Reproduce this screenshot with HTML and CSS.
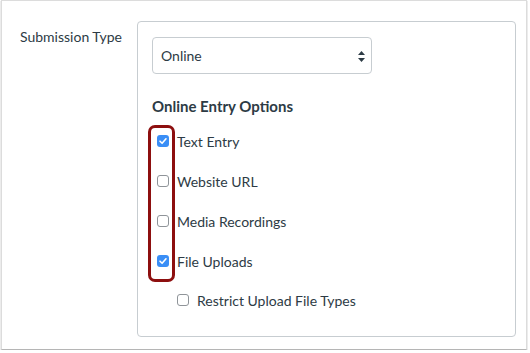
FILE: index.html
```html
<!DOCTYPE html>
<html lang="en">
<head>
    <meta charset="UTF-8">
    <title>Submission Type</title>
    <link rel="stylesheet" href="styles.css">
</head>
<body>
    <div class="frame">
        <div class="field-row">
            <div class="field-label">Submission Type</div>
            <div class="field-box">
                <!-- select -->
                <div class="select">
                    <span>Online</span>
                    <svg class="select-arrows" width="7" height="11" viewBox="0 0 7 11">
                        <path d="M3.5 0 L7 4 L0 4 Z" fill="#2d3b45"/>
                        <path d="M0 7 L7 7 L3.5 11 Z" fill="#2d3b45"/>
                    </svg>
                </div>

                <h3 class="options-title">Online Entry Options</h3>

                <div class="options">
                    <div class="option">
                        <span class="box checked">
                            <svg width="12" height="12" viewBox="0 0 12 12"><path d="M3 6.2 L5.1 8.3 L9 3.8" fill="none" stroke="#fff" stroke-width="1.6" stroke-linecap="round" stroke-linejoin="round"/></svg>
                        </span>
                        <span>Text Entry</span>
                    </div>
                    <div class="option">
                        <span class="box"></span>
                        <span>Website URL</span>
                    </div>
                    <div class="option">
                        <span class="box"></span>
                        <span>Media Recordings</span>
                    </div>
                    <div class="option">
                        <span class="box checked">
                            <svg width="12" height="12" viewBox="0 0 12 12"><path d="M3 6.2 L5.1 8.3 L9 3.8" fill="none" stroke="#fff" stroke-width="1.6" stroke-linecap="round" stroke-linejoin="round"/></svg>
                        </span>
                        <span>File Uploads</span>
                    </div>
                    <div class="option sub-option">
                        <span class="box"></span>
                        <span>Restrict Upload File Types</span>
                    </div>

                    <!-- highlight -->
                    <div class="highlight"></div>
                </div>
            </div>
        </div>
    </div>
</body>
</html>
```

FILE: styles.css
```css
body {
    margin: 0;
    background-color: #fff;
    font-family: Lato, "Liberation Sans", sans-serif;
    color: #2d3b45;
}
.frame {
    box-sizing: border-box;
    width: 526px;
    height: 350px;
    margin-left: 1px;
    border: 1px solid #dcdcdc;
    border-bottom-color: #b5b5b5;
    box-shadow: 0 1px 1px rgba(0, 0, 0, 0.45);
    padding: 20px 0 0 18px;
}
.field-row {
    display: flex;
}
.field-label {
    width: 117px;
    font-size: 14px;
    line-height: 20px;
    padding-top: 6px;
}
.field-box {
    box-sizing: border-box;
    width: 379px;
    height: 316px;
    border: 1px solid #c7cdd1;
    border-radius: 4px;
    padding: 15px 14px;
}
.select {
    box-sizing: border-box;
    width: 220px;
    height: 37px;
    border: 1px solid #c7cdd1;
    border-radius: 4px;
    display: flex;
    align-items: center;
    justify-content: space-between;
    padding: 0 6px 0 8px;
    font-size: 14px;
}
.select-arrows {
    margin-top: 1px;
}
.options-title {
    margin: 22px 0 5px;
    font-size: 15px;
    line-height: 20px;
    font-weight: bold;
}
.options {
    position: relative;
}
.option {
    display: flex;
    align-items: center;
    gap: 8px;
    height: 40px;
    font-size: 14px;
    padding-left: 5px;
}
.sub-option {
    padding-left: 25px;
    height: 38px;
}
.box {
    box-sizing: border-box;
    width: 12px;
    height: 12px;
    border: 1px solid #8f9499;
    border-radius: 3px;
    background-color: #fff;
    display: flex;
}
.box.checked {
    border: none;
    background-color: #3a8ef6;
}
.highlight {
    position: absolute;
    left: -4px;
    top: 4px;
    box-sizing: border-box;
    width: 27px;
    height: 157px;
    border: 3px solid #8d0f0f;
    border-radius: 7px;
}
```
